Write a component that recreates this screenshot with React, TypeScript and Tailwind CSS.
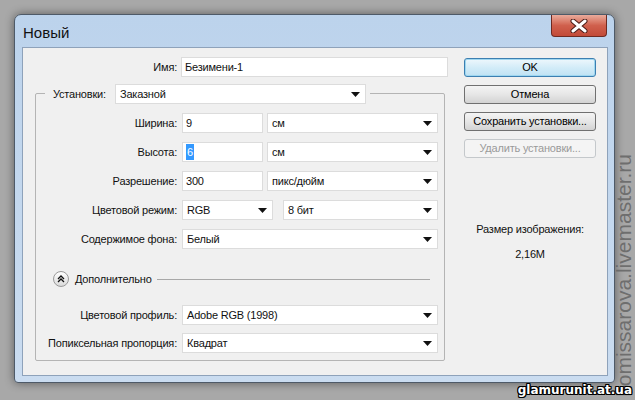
import React from 'react';

const Arrow = () => (
  <svg className="ml-auto mr-[5px] shrink-0" width="9" height="5" viewBox="0 0 9 5">
    <path d="M0 0h9L4.5 5z" fill="#111" />
  </svg>
);

const Select = ({ value, className = '' }: { value: string; className?: string }) => (
  <div className={`h-[20px] flex items-center bg-white border border-[#dcdcdc] pl-[4px] ${className}`}>
    <span>{value}</span>
    <Arrow />
  </div>
);

const Field = ({ children, className = '' }: { children: React.ReactNode; className?: string }) => (
  <div className={`h-[20px] flex items-center bg-white border border-[#dcdcdc] pl-[3px] ${className}`}>
    {children}
  </div>
);

const Row = ({ label, className = 'mt-[9px]', children }: { label: string; className?: string; children: React.ReactNode }) => (
  <div className={`flex items-center ${className}`}>
    <div className="w-[146px] flex justify-end pr-[5px] shrink-0 whitespace-nowrap">{label}</div>
    {children}
  </div>
);

const Button = ({ children, variant = 'normal' }: { children: React.ReactNode; variant?: 'default' | 'normal' | 'disabled' }) => {
  const styles = {
    default: 'border-[#3c7fb1] bg-gradient-to-b from-[#eef7fc] via-[#d3ecf8] to-[#bfe2f4] text-black shadow-[inset_0_0_0_1px_#9fd7f0]',
    normal: 'border-[#707070] bg-gradient-to-b from-[#f4f4f4] via-[#e6e6e6] to-[#d3d3d3] text-black',
    disabled: 'border-[#c4c8cb] bg-[#f4f4f4] text-[#9a9a9a]',
  }[variant];
  return (
    <div className={`w-[132px] h-[19px] rounded-[3px] border flex items-center justify-center whitespace-nowrap ${styles}`}>
      {children}
    </div>
  );
};

export default function App() {
  return (
    <div className="relative w-[635px] h-[400px] overflow-hidden bg-[#a8a8a8] pt-[14px] pl-[14px] font-['Liberation_Sans',Arial,sans-serif] text-[11px] tracking-[-0.2px] text-[#111]">
      {/* window */}
      <div className="w-[601px] h-[369px] flex flex-col rounded-t-[7px] rounded-b-[4px] border border-[#4e5a68] bg-gradient-to-b from-[#bcd3ec] to-[#cadcf0] shadow-[0_0_10px_rgba(0,0,0,0.45)]">
        {/* title bar */}
        <div className="h-[32px] flex items-start justify-between shrink-0">
          <span className="mt-[7px] ml-[8px] text-[15px] tracking-normal text-[#111]">Новый</span>
          <div className="mr-[7px] w-[56px] h-[22px] rounded-b-[4px] border border-t-0 border-[#6e2a21] bg-gradient-to-b from-[#e9ab9c] via-[#d0604d] to-[#c24a37] flex items-center justify-center">
            <svg width="18" height="14" viewBox="0 0 18 14">
              <path d="M3 2L15 12M15 2L3 12" stroke="#4a1a14" strokeWidth="5" strokeLinecap="round" />
              <path d="M3 2L15 12M15 2L3 12" stroke="#fff" strokeWidth="3" strokeLinecap="round" />
            </svg>
          </div>
        </div>

        {/* client area */}
        <div className="ml-[7px] w-[586px] h-[329px] border border-[#8ea2ba] bg-[#f0f0f0] flex items-start">
          {/* left column */}
          <div className="w-[425px] pt-[9px] shrink-0">
            <div className="flex items-center">
              <div className="w-[158px] text-right pr-[4px] shrink-0">Имя:</div>
              <Field className="w-[267px]">Безимени-1</Field>
            </div>

            {/* group box */}
            <div className="mt-[16px] ml-[12px] w-[410px] h-[268px] border border-[#b4b4b4] rounded-[2px]">
              <div className="-mt-[10px] ml-[9px] w-[325px] flex items-center bg-[#f0f0f0]">
                <span className="ml-[8px] mr-[5px] w-[57px] whitespace-nowrap">Установки:</span>
                <Select value="Заказной" className="w-[251px]" />
              </div>

              <Row label="Ширина:">
                <Field className="w-[81px]">9</Field>
                <Select value="см" className="w-[171px] ml-[4px]" />
              </Row>
              <Row label="Высота:">
                <Field className="w-[81px] border-[#4e8fc7]">
                  <span className="bg-[#3399ff] text-white px-px">6</span>
                </Field>
                <Select value="см" className="w-[171px] ml-[4px]" />
              </Row>
              <Row label="Разрешение:">
                <Field className="w-[81px]">300</Field>
                <Select value="пикс/дюйм" className="w-[171px] ml-[4px]" />
              </Row>
              <Row label="Цветовой режим:">
                <Select value="RGB" className="w-[91px]" />
                <Select value="8 бит" className="w-[155px] ml-[10px]" />
              </Row>
              <Row label="Содержимое фона:">
                <Select value="Белый" className="w-[256px]" />
              </Row>

              <div className="flex items-center mt-[22px] h-[16px]">
                <div className="ml-[17px] w-[16px] h-[16px] rounded-full border border-[#9a9a9a] bg-gradient-to-b from-white to-[#dadada] flex items-center justify-center shrink-0">
                  <svg width="8" height="8" viewBox="0 0 8 8">
                    <path d="M1 4L4 1L7 4M1 7L4 4L7 7" stroke="#111" strokeWidth="1.3" fill="none" />
                  </svg>
                </div>
                <span className="ml-[6px]">Дополнительно</span>
                <div className="flex-1 h-px bg-[#a8a8a8] ml-[5px] mr-[14px]" />
              </div>

              <Row label="Цветовой профиль:" className="mt-[18px]">
                <Select value="Adobe RGB (1998)" className="w-[256px]" />
              </Row>
              <Row label="Попиксельная пропорция:" className="mt-[8px]">
                <Select value="Квадрат" className="w-[256px]" />
              </Row>
            </div>
          </div>

          {/* right column */}
          <div className="ml-[16px] pt-[10px] flex flex-col">
            <Button variant="default">OK</Button>
            <div className="mt-[8px]"><Button>Отмена</Button></div>
            <div className="mt-[8px]"><Button>Сохранить установки...</Button></div>
            <div className="mt-[8px]"><Button variant="disabled">Удалить установки...</Button></div>
            <div className="mt-[64px] w-[132px] text-center leading-[14px]">Размер изображения:</div>
            <div className="mt-[11px] w-[132px] text-center leading-[14px]">2,16M</div>
          </div>
        </div>
      </div>

      {/* watermarks */}
      <div className="absolute left-[613px] top-[154px] [writing-mode:vertical-rl] rotate-180 text-[21px] leading-[21px] tracking-normal text-[#5f5f5f]/80 whitespace-nowrap">
        komissarova.livemaster.ru
      </div>
      <div className="absolute right-[3px] bottom-[3px] font-['DejaVu_Sans',sans-serif] font-bold text-[12px] leading-[14px] tracking-normal text-white [text-shadow:1px_1px_0_#000,-1px_-1px_0_#000,1px_-1px_0_#000,-1px_1px_0_#000,0_1px_0_#000,0_-1px_0_#000,1px_0_0_#000,-1px_0_0_#000]">
        glamurunit.at.ua
      </div>
    </div>
  );
}
